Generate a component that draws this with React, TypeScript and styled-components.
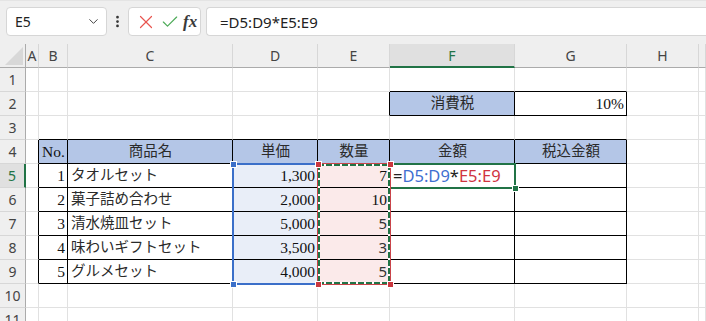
import React from "react";
import styled, { createGlobalStyle, css } from "styled-components";
import { ChevronDown, EllipsisVertical, X, Check } from "lucide-react";

const GlobalStyle = createGlobalStyle`
  html, body {
    margin: 0;
    padding: 0;
    background: #ffffff;
    overflow: hidden;
  }
  body {
    font-family: "Noto Sans", "Liberation Sans", sans-serif;
  }
`;

const COL_WIDTHS = [26, 13, 29, 165, 85, 72, 125, 112, 72];
const COL_NAMES = ["A", "B", "C", "D", "E", "F", "G", "H", ""];
const ROW_COUNT = 11;
const ROW_H = 24;

const GRID = "#e1e1e1";
const GREEN = "#217346";
const HEAD_FILL = "#b4c6e7";
const D_FILL = "#e9eef8";
const E_FILL = "#fbeaea";

type Font = "serif" | "sans" | "cjk";
type Align = "left" | "right" | "center";

interface CellDef {
  text?: React.ReactNode;
  align?: Align;
  fill?: string;
  font?: Font;
  br?: boolean;
  bb?: boolean;
  overflow?: boolean;
}

const ITEMS = [
  { no: 1, name: "タオルセット", price: "1,300", qty: "7", sans: false },
  { no: 2, name: "菓子詰め合わせ", price: "2,000", qty: "10", sans: false },
  { no: 3, name: "清水焼皿セット", price: "5,000", qty: "5", sans: true },
  { no: 4, name: "味わいギフトセット", price: "3,500", qty: "3", sans: true },
  { no: 5, name: "グルメセット", price: "4,000", qty: "5", sans: true },
];

const HEADERS = ["No.", "商品名", "単価", "数量", "金額", "税込金額"];

const FormulaText = styled.span`
  font-family: "Noto Sans", "Liberation Sans", sans-serif;
  font-size: 16.5px;
  color: #222;
`;

const Ref = styled.span<{ $c: string }>`
  color: ${(p) => p.$c};
`;

// which cell shows what (col 0 = A, row 1 = 1)
const getCell = (col: number, row: number): CellDef => {
  const inTableCols = col >= 1 && col <= 6;
  const def: CellDef = {};

  // black borders of the two tables
  if ((col === 0 || inTableCols) && row >= 4 && row <= 9) def.br = true;
  if (inTableCols && row >= 3 && row <= 9) def.bb = true;
  if ((col === 5 || col === 6) && (row === 1 || row === 2)) def.bb = true;
  if ((col === 4 || col === 5 || col === 6) && row === 2) def.br = true;

  if (row === 2 && col === 5) {
    return { ...def, text: "消費税", align: "center", fill: HEAD_FILL, font: "cjk" };
  }
  if (row === 2 && col === 6) {
    return { ...def, text: "10%", align: "right", font: "serif" };
  }
  if (row === 4 && inTableCols) {
    return {
      ...def,
      text: HEADERS[col - 1],
      align: "center",
      fill: HEAD_FILL,
      font: col === 1 ? "serif" : "cjk",
    };
  }
  if (row >= 5 && row <= 9) {
    const item = ITEMS[row - 5];
    if (col === 1) return { ...def, text: item.no, align: "right", font: "serif" };
    if (col === 2) return { ...def, text: item.name, align: "left", font: "cjk" };
    if (col === 3) return { ...def, text: item.price, align: "right", font: "serif", fill: D_FILL };
    if (col === 4)
      return { ...def, text: item.qty, align: "right", font: item.sans ? "sans" : "serif", fill: E_FILL };
    if (col === 5 && row === 5)
      return {
        ...def,
        overflow: true,
        align: "left",
        text: (
          <FormulaText>
            =<Ref $c="#3f6fd1">D5:D9</Ref>*<Ref $c="#d0343f">E5:E9</Ref>
          </FormulaText>
        ),
      };
  }
  return def;
};

/* ---------- formula bar ---------- */

const Toolbar = styled.div`
  height: 44px;
  box-sizing: border-box;
  padding: 6px 0 8px 6px;
  display: flex;
  align-items: stretch;
  background: #efefef;
  border-top: 1px solid #e4e4e4;
`;

const NameBox = styled.div`
  width: 101px;
  box-sizing: border-box;
  background: #fff;
  border: 1px solid #d6d6d6;
  border-radius: 4px;
  display: flex;
  align-items: center;
  justify-content: space-between;
  padding: 0 5px 0 8px;
  font-size: 14px;
  color: #222;

  svg {
    color: #444;
  }
`;

const Dots = styled.div`
  width: 21px;
  display: flex;
  align-items: center;
  justify-content: center;
  color: #333;
`;

const ButtonBox = styled.div`
  width: 73px;
  box-sizing: border-box;
  background: #fff;
  border: 1px solid #d6d6d6;
  border-radius: 4px;
  display: flex;
  align-items: center;
  gap: 3px;
  padding: 0 0 0 6px;
`;

const Fx = styled.span`
  font-family: "Liberation Serif", "DejaVu Serif", serif;
  font-style: italic;
  font-weight: bold;
  font-size: 17px;
  color: #3a3a3a;
`;

const FormulaBox = styled.div`
  flex: 1;
  margin-left: 5px;
  background: #fff;
  border: 1px solid #d6d6d6;
  border-right: none;
  border-radius: 4px 0 0 4px;
  display: flex;
  align-items: center;
  padding-left: 13px;
  font-size: 15px;
  color: #222;
`;

/* ---------- sheet ---------- */

const Sheet = styled.div`
  position: relative;
  display: grid;
  grid-template-columns: ${COL_WIDTHS.map((w) => `${w}px`).join(" ")} 1fr;
  grid-auto-rows: ${ROW_H}px;
`;

const headerBase = css`
  box-sizing: border-box;
  background: #efefef;
  display: flex;
  align-items: center;
  justify-content: center;
  font-family: "Noto Sans", "Liberation Sans", sans-serif;
  font-size: 14px;
  color: #444;
`;

const Corner = styled.div`
  ${headerBase};
  position: relative;
  border-right: 1px solid #ababab;
  border-bottom: 1px solid #ababab;

  &::after {
    content: "";
    position: absolute;
    right: 2px;
    bottom: 2px;
    width: 18px;
    height: 18px;
    background: #d8d8d8;
    clip-path: polygon(100% 0, 100% 100%, 0 100%);
  }
`;

const ColHeader = styled.div<{ $active?: boolean }>`
  ${headerBase};
  border-right: 1px solid #d7d7d7;
  border-bottom: ${(p) => (p.$active ? `2px solid ${GREEN}` : "1px solid #ababab")};
  ${(p) =>
    p.$active &&
    css`
      background: #e0e0e0;
      color: ${GREEN};
    `}
`;

const RowHeader = styled.div<{ $active?: boolean }>`
  ${headerBase};
  border-bottom: 1px solid #d7d7d7;
  border-right: ${(p) => (p.$active ? `2px solid ${GREEN}` : "1px solid #ababab")};
  ${(p) =>
    p.$active &&
    css`
      background: #e0e0e0;
      color: ${GREEN};
    `}
`;

const fontStack: Record<Font, string> = {
  serif: `"Liberation Serif", "Noto Sans CJK JP", serif`,
  sans: `"Noto Sans", "Liberation Sans", sans-serif`,
  cjk: `"Liberation Serif", "Noto Sans CJK JP", serif`,
};

const fontSize: Record<Font, string> = {
  serif: "15.5px",
  sans: "15px",
  cjk: "14.5px",
};

const Cell = styled.div<{
  $fill?: string;
  $align?: Align;
  $br?: boolean;
  $bb?: boolean;
  $font?: Font;
  $overflow?: boolean;
}>`
  box-sizing: border-box;
  background: ${(p) => p.$fill || "#fff"};
  border-right: 1px solid ${(p) => (p.$br ? "#000" : GRID)};
  border-bottom: 1px solid ${(p) => (p.$bb ? "#000" : GRID)};
  display: flex;
  align-items: flex-end;
  justify-content: ${(p) =>
    p.$align === "right" ? "flex-end" : p.$align === "center" ? "center" : "flex-start"};
  padding: 0 2px 2px 3px;
  font-family: ${(p) => fontStack[p.$font || "serif"]};
  font-size: ${(p) => fontSize[p.$font || "serif"]};
  line-height: 19px;
  color: ${(p) => (p.$font === "cjk" ? "#2a2a2a" : p.$font === "sans" ? "#333" : "#111")};
  white-space: nowrap;
  overflow: ${(p) => (p.$overflow ? "visible" : "hidden")};
  position: ${(p) => (p.$overflow ? "relative" : "static")};
  z-index: ${(p) => (p.$overflow ? 1 : "auto")};
`;

/* ---------- selection overlays ---------- */

const colLeft = (c: number) => COL_WIDTHS.slice(0, c + 1).reduce((a, b) => a + b, 0);
const rowTop = (r: number) => r * ROW_H;

const RangeBorder = styled.div<{ $x: number; $y: number; $w: number; $h: number; $color: string }>`
  position: absolute;
  left: ${(p) => p.$x}px;
  top: ${(p) => p.$y}px;
  width: ${(p) => p.$w}px;
  height: ${(p) => p.$h}px;
  box-sizing: border-box;
  border: 2px solid ${(p) => p.$color};
  pointer-events: none;
  z-index: 2;
`;

const antsH = `repeating-linear-gradient(90deg, ${GREEN} 0 6px, #ffffff 6px 8px)`;
const antsV = `repeating-linear-gradient(180deg, ${GREEN} 0 6px, #ffffff 6px 8px)`;

const CopyAnts = styled.div<{ $x: number; $y: number; $w: number; $h: number }>`
  position: absolute;
  left: ${(p) => p.$x}px;
  top: ${(p) => p.$y}px;
  width: ${(p) => p.$w}px;
  height: ${(p) => p.$h}px;
  box-sizing: border-box;
  border: 1px solid #c9444a;
  background:
    ${antsH} top left / 100% 2px no-repeat,
    ${antsH} bottom left / 100% 2px no-repeat,
    ${antsV} top left / 2px 100% no-repeat,
    ${antsV} top right / 2px 100% no-repeat;
  background-origin: padding-box;
  background-clip: padding-box;
  pointer-events: none;
  z-index: 3;
`;

const Handle = styled.span<{ $x: number; $y: number; $color: string }>`
  position: absolute;
  left: ${(p) => p.$x - 3}px;
  top: ${(p) => p.$y - 3}px;
  width: 5px;
  height: 5px;
  background: ${(p) => p.$color};
  border: 1px solid #fff;
  z-index: 4;
`;

const App = () => {
  const dX = colLeft(3) - 1;
  const eX = colLeft(4) - 1;
  const fX = colLeft(5) - 1;
  const r5 = rowTop(5) - 1;
  const r10 = rowTop(10) - 1;

  return (
    <>
      <GlobalStyle />
      <Toolbar>
        <NameBox>
          E5
          <ChevronDown size={15} strokeWidth={1.6} />
        </NameBox>
        <Dots>
          <EllipsisVertical size={15} strokeWidth={2.4} />
        </Dots>
        <ButtonBox>
          <X size={22} strokeWidth={1.3} color="#e8554f" />
          <Check size={20} strokeWidth={1.4} color="#4caa57" />
          <Fx>fx</Fx>
        </ButtonBox>
        <FormulaBox>=D5:D9*E5:E9</FormulaBox>
      </Toolbar>

      <Sheet>
        <Corner />
        {COL_NAMES.map((name, i) => (
          <ColHeader key={`h${i}`} $active={name === "F"}>
            {name}
          </ColHeader>
        ))}

        {Array.from({ length: ROW_COUNT }, (_, ri) => {
          const row = ri + 1;
          return (
            <React.Fragment key={row}>
              <RowHeader $active={row === 5}>{row}</RowHeader>
              {COL_NAMES.map((_, col) => {
                const c = getCell(col, row);
                return (
                  <Cell
                    key={col}
                    $fill={c.fill}
                    $align={c.align}
                    $br={c.br}
                    $bb={c.bb}
                    $font={c.font}
                    $overflow={c.overflow}
                  >
                    {c.text}
                  </Cell>
                );
              })}
            </React.Fragment>
          );
        })}

        <RangeBorder $x={dX} $y={r5} $w={eX - dX + 2} $h={r10 - r5 + 2} $color="#3b6fc9" />
        <CopyAnts $x={eX} $y={r5} $w={fX - eX + 2} $h={r10 - r5 + 2} />
        <RangeBorder $x={fX} $y={r5} $w={colLeft(6) - fX + 1} $h={ROW_H + 2} $color={GREEN} />

        <Handle $x={dX + 1} $y={r5 + 1} $color="#3b6fc9" />
        <Handle $x={dX + 1} $y={r10 + 1} $color="#3b6fc9" />
        <Handle $x={eX + 1} $y={r5 + 1} $color="#c9373f" />
        <Handle $x={eX + 1} $y={r10 + 1} $color="#c9373f" />
        <Handle $x={fX + 1} $y={r5 + 1} $color="#c9373f" />
        <Handle $x={fX + 1} $y={r10 + 1} $color="#c9373f" />
        <Handle $x={colLeft(6)} $y={rowTop(6)} $color={GREEN} />
      </Sheet>
    </>
  );
};

export default App;
